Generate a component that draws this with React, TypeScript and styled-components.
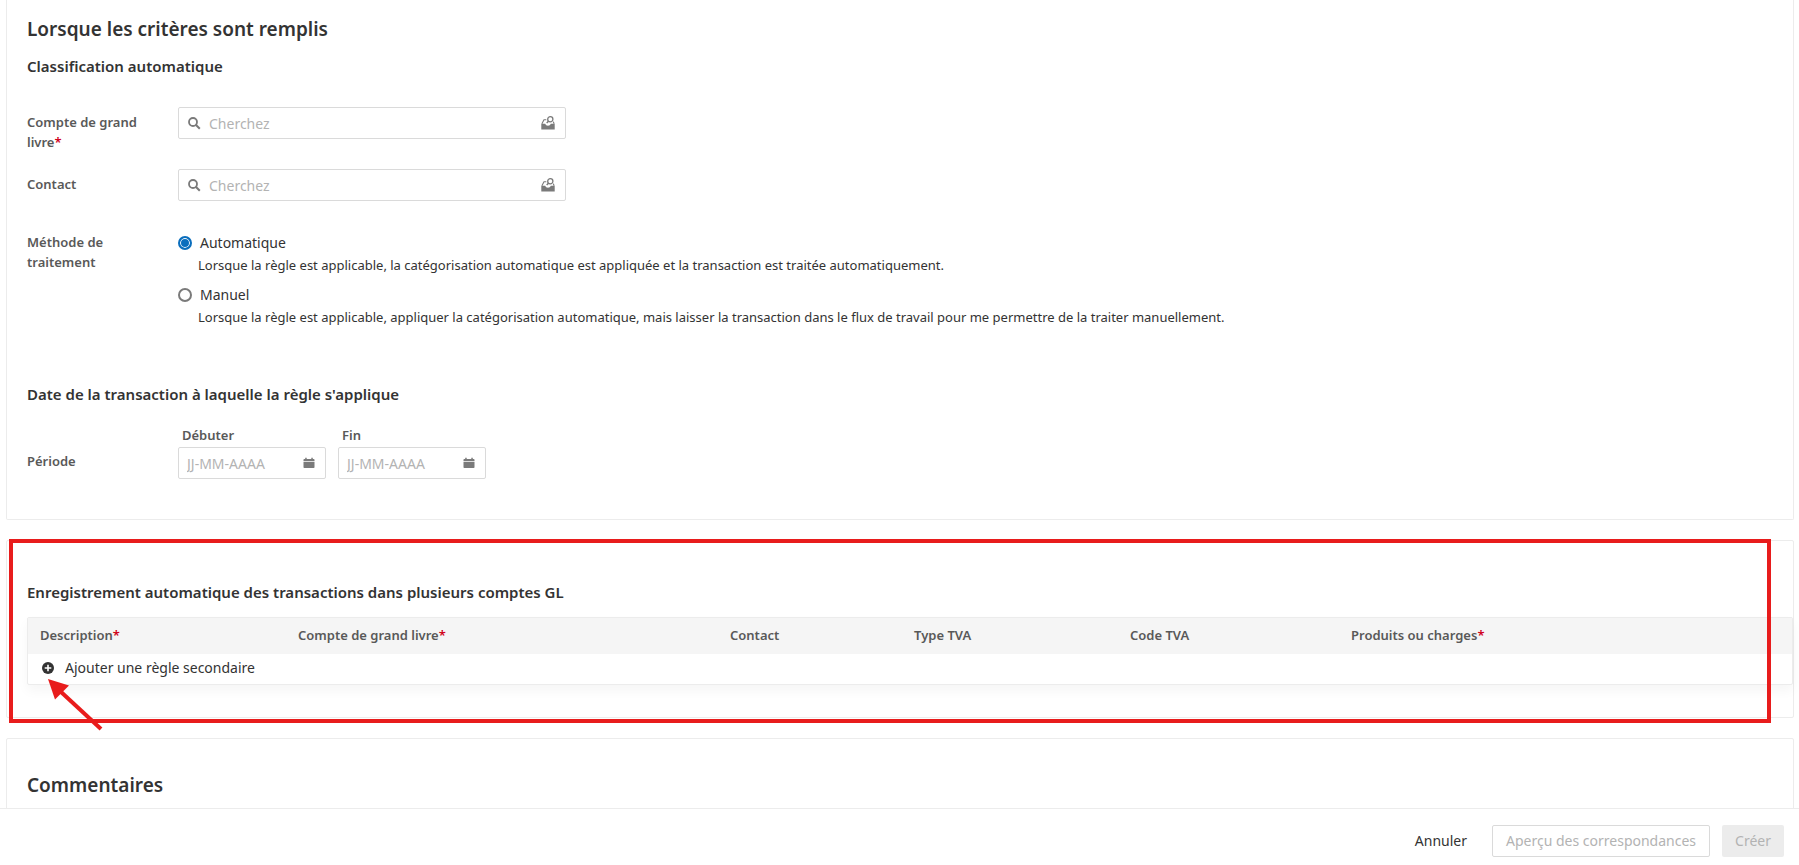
import React, { useId, useState } from 'react';
import styled, { createGlobalStyle, ThemeProvider } from 'styled-components';

const theme = {
  text: '#333333',
  label: '#595959',
  muted: '#b3b3b3',
  icon: '#7a7a7a',
  line: '#ececec',
  fieldLine: '#dadada',
  head: '#f5f5f5',
  accent: '#0a6ebd',
  required: '#d0021b',
  mark: '#e81c1c',
};

const GlobalStyle = createGlobalStyle`
  *, *::before, *::after { box-sizing: border-box; }
  body {
    margin: 0;
    background: #ffffff;
    color: #333333;
    font-family: "Noto Sans", "Open Sans", sans-serif;
    font-size: 13px;
    line-height: 20px;
  }
  button, input { font: inherit; color: inherit; }
`;

const Shell = styled.div`
  display: flex;
  flex-direction: column;
  height: 100vh;
`;

const Content = styled.main`
  flex: 1;
  min-height: 0;
  overflow-y: auto;
  scrollbar-width: none;
  display: flex;
  flex-direction: column;
  gap: 20px;
  padding: 0 5px 0 6px;
`;

const Panel = styled.section<{ $continued?: boolean }>`
  position: relative;
  flex: none;
  border: 1px solid ${({ theme }) => theme.line};
  border-radius: 2px;
  ${({ $continued }) => $continued && 'border-top: 0; border-top-left-radius: 0; border-top-right-radius: 0;'}
`;

const CriteriaPanel = styled(Panel)`
  padding: 15px 20px 40px;
`;

const RulesPanel = styled(Panel)`
  padding: 38px 0 32px 20px;
`;

const CommentsPanel = styled(Panel)`
  padding: 32px 20px 40px;
`;

const Title = styled.h2`
  margin: 0;
  font-size: 19px;
  font-weight: 600;
  line-height: 28px;
`;

const Subtitle = styled.h3`
  margin: 0;
  font-size: 15px;
  font-weight: 600;
  line-height: 26px;
`;

const Classification = styled.div`
  margin-top: 10px;
`;

const Fields = styled.div`
  display: flex;
  flex-direction: column;
  gap: 17px;
  margin-top: 28px;
`;

const FieldRow = styled.div`
  display: grid;
  grid-template-columns: 151px minmax(0, 1fr);
`;

const FieldLabel = styled.label`
  padding: 5px 24px 0 0;
  color: ${({ theme }) => theme.label};
  font-weight: 600;
`;

const Star = styled.span`
  color: ${({ theme }) => theme.required};
`;

const InputBox = styled.div<{ $width: number; $gap: number }>`
  display: flex;
  align-items: center;
  gap: ${({ $gap }) => $gap}px;
  width: 100%;
  max-width: ${({ $width }) => $width}px;
  height: 32px;
  padding: 0 10px 0 ${({ $gap }) => ($gap ? 9 : 8)}px;
  border: 1px solid ${({ theme }) => theme.fieldLine};
  border-radius: 2px;
  background: #ffffff;
  color: ${({ theme }) => theme.icon};
  svg { flex: none; }
`;

const TextInput = styled.input`
  flex: 1;
  min-width: 0;
  height: 30px;
  padding: 0;
  border: 0;
  outline: 0;
  background: none;
  color: ${({ theme }) => theme.text};
  font-size: 14px;
  &::placeholder { color: ${({ theme }) => theme.muted}; opacity: 1; }
`;

const IconButton = styled.button`
  display: flex;
  padding: 0;
  border: 0;
  background: none;
  color: ${({ theme }) => theme.icon};
  cursor: pointer;
`;

const MethodGroup = styled.fieldset`
  display: grid;
  grid-template-columns: 151px minmax(0, 1fr);
  margin: 26px 0 0;
  padding: 0;
  border: 0;
`;

const MethodLabel = styled.span`
  padding: 5px 40px 0 0;
  color: ${({ theme }) => theme.label};
  font-weight: 600;
`;

const Options = styled.div`
  display: flex;
  flex-direction: column;
  gap: 10px;
  padding-top: 6px;
`;

const OptionLabel = styled.label`
  display: flex;
  align-items: center;
  gap: 8px;
  font-size: 14px;
`;

const Radio = styled.input`
  appearance: none;
  width: 14px;
  height: 14px;
  margin: 0;
  border: 2px solid ${({ theme }) => theme.icon};
  border-radius: 50%;
  background: #ffffff;
  &:checked {
    border-color: ${({ theme }) => theme.accent};
    background: ${({ theme }) => theme.accent};
    box-shadow: inset 0 0 0 1px #ffffff;
  }
`;

const OptionHint = styled.p`
  margin: 2px 0 0;
  padding-left: 20px;
`;

const DateSection = styled.div`
  margin-top: 54px;
`;

const DateRow = styled.div`
  display: grid;
  grid-template-columns: 151px minmax(0, 1fr);
  align-items: end;
  margin-top: 18px;
`;

const PeriodLabel = styled.span`
  padding-bottom: 8px;
  color: ${({ theme }) => theme.label};
  font-weight: 600;
`;

const DatePair = styled.div`
  display: flex;
  gap: 12px;
`;

const DateField = styled.div`
  display: flex;
  flex-direction: column;
  gap: 2px;
  width: 148px;
`;

const DateLabel = styled.label`
  padding-left: 4px;
  color: ${({ theme }) => theme.label};
  font-weight: 600;
`;

const TableCard = styled.div`
  margin-top: 12px;
  border: 1px solid ${({ theme }) => theme.line};
  border-radius: 2px;
  background: #ffffff;
  box-shadow: 0 6px 12px rgba(0, 0, 0, 0.04);
`;

const RuleTable = styled.table`
  width: 100%;
  table-layout: fixed;
  border-collapse: collapse;
`;

const Col = styled.col<{ $width?: number }>`
  width: ${({ $width }) => ($width ? `${$width}px` : 'auto')};
`;

const HeadCell = styled.th`
  height: 36px;
  padding: 0 12px 2px;
  background: ${({ theme }) => theme.head};
  color: ${({ theme }) => theme.label};
  font-weight: 600;
  text-align: left;
`;

const AddCell = styled.td`
  height: 30px;
  padding: 0 14px 2px;
`;

const AddButton = styled.button`
  display: flex;
  align-items: center;
  gap: 11px;
  padding: 0;
  border: 0;
  background: none;
  color: ${({ theme }) => theme.text};
  font-size: 14px;
  cursor: pointer;
`;

const HighlightFrame = styled.div`
  position: absolute;
  top: -2px;
  right: 22px;
  bottom: -6px;
  left: 2px;
  z-index: 1;
  border: 4px solid ${({ theme }) => theme.mark};
  pointer-events: none;
`;

const HighlightArrow = styled.svg`
  position: absolute;
  top: 138px;
  left: 40px;
  z-index: 2;
  color: ${({ theme }) => theme.mark};
  pointer-events: none;
`;

const Footer = styled.footer`
  position: relative;
  z-index: 3;
  display: flex;
  flex: none;
  justify-content: flex-end;
  gap: 12px;
  padding: 16px 15px 8px;
  border-top: 1px solid ${({ theme }) => theme.line};
  background: #ffffff;
`;

const Button = styled.button<{ $kind: 'link' | 'outline' | 'solid' }>`
  height: 32px;
  padding: 0 ${({ $kind }) => ($kind === 'outline' ? 13 : 12)}px;
  border: 1px solid ${({ $kind, theme }) => ($kind === 'outline' ? theme.fieldLine : 'transparent')};
  border-radius: 2px;
  background: ${({ $kind }) => ($kind === 'solid' ? '#ececec' : 'none')};
  color: ${({ theme }) => theme.text};
  font-size: 14px;
  cursor: pointer;
  &:disabled { color: ${({ theme }) => theme.muted}; cursor: default; }
`;

const SearchIcon = () => (
  <svg width="13" height="13" viewBox="0 0 13 13" fill="none" stroke="currentColor" aria-hidden="true">
    <circle cx="5" cy="5" r="4" strokeWidth="1.8" />
    <path d="M7.800 7.800l4 4" strokeWidth="2" />
  </svg>
);

const LookupIcon = () => (
  <svg width="14" height="14" viewBox="0 0 14 14" fill="none" stroke="currentColor" aria-hidden="true">
    <path d="M.9 7.800L3 3.700h2.300M12.300 5.600l.8 2.200" strokeWidth="1.100" />
    <path d="M.3 7.800h3.900c.4 1.300 1.400 1.900 2.800 1.900s2.400-.6 2.800-1.900h3.900v5.700H.3z" fill="currentColor" stroke="none" />
    <circle cx="9.300" cy="3.300" r="2.600" fill="#ffffff" strokeWidth="1.300" />
    <path d="M7.400 5.300L5.700 7.100" strokeWidth="1.400" />
  </svg>
);

const CalendarIcon = () => (
  <svg width="12" height="12" viewBox="0 0 12 12" fill="currentColor" aria-hidden="true">
    <path d="M.5 4.200V2.700a.8.8 0 0 1 .8-.8h.9V.800h1.500v1.100h4.600V.800h1.500v1.100h.9a.8.8 0 0 1 .8.8v1.500zM.5 5h11v5.200a.8.8 0 0 1-.8.8H1.300a.8.8 0 0 1-.8-.8z" />
  </svg>
);

const AddIcon = () => (
  <svg width="12" height="12" viewBox="0 0 12 12" aria-hidden="true">
    <circle cx="6" cy="6" r="6" fill="#333333" />
    <path d="M6 2.700v6.600M2.700 6h6.600" stroke="#ffffff" strokeWidth="1.600" />
  </svg>
);

function SearchField({ label, required }: { label: string; required?: boolean }) {
  const id = useId();
  return (
    <FieldRow>
      <FieldLabel htmlFor={id}>
        {label}
        {required && <Star>*</Star>}
      </FieldLabel>
      <InputBox $width={388} $gap={8}>
        <SearchIcon />
        <TextInput id={id} type="text" placeholder="Cherchez" />
        <IconButton type="button" aria-label={`Parcourir : ${label}`}>
          <LookupIcon />
        </IconButton>
      </InputBox>
    </FieldRow>
  );
}

function DateInput({ label }: { label: string }) {
  const id = useId();
  return (
    <DateField>
      <DateLabel htmlFor={id}>{label}</DateLabel>
      <InputBox $width={148} $gap={0}>
        <TextInput id={id} type="text" placeholder="JJ-MM-AAAA" />
        <IconButton type="button" aria-label={`Calendrier : ${label}`}>
          <CalendarIcon />
        </IconButton>
      </InputBox>
    </DateField>
  );
}

const METHODS = [
  {
    value: 'auto',
    label: 'Automatique',
    hint: 'Lorsque la règle est applicable, la catégorisation automatique est appliquée et la transaction est traitée automatiquement.',
  },
  {
    value: 'manual',
    label: 'Manuel',
    hint: 'Lorsque la règle est applicable, appliquer la catégorisation automatique, mais laisser la transaction dans le flux de travail pour me permettre de la traiter manuellement.',
  },
];

const COLUMNS: { label: string; width?: number; required?: boolean }[] = [
  { label: 'Description', width: 258, required: true },
  { label: 'Compte de grand livre', width: 432, required: true },
  { label: 'Contact', width: 184 },
  { label: 'Type TVA', width: 216 },
  { label: 'Code TVA', width: 221 },
  { label: 'Produits ou charges', required: true },
];

export default function App() {
  const [method, setMethod] = useState('auto');

  return (
    <ThemeProvider theme={theme}>
      <GlobalStyle />
      <Shell>
        <Content>
          <CriteriaPanel $continued>
            <Title>Lorsque les critères sont remplis</Title>
            <Classification>
              <Subtitle>Classification automatique</Subtitle>
              <Fields>
                <SearchField label="Compte de grand livre" required />
                <SearchField label="Contact" />
              </Fields>
              <MethodGroup aria-labelledby="method-label">
                <MethodLabel id="method-label">Méthode de traitement</MethodLabel>
                <Options>
                  {METHODS.map(({ value, label, hint }) => (
                    <div key={value}>
                      <OptionLabel>
                        <Radio
                          type="radio"
                          name="method"
                          value={value}
                          checked={method === value}
                          onChange={() => setMethod(value)}
                        />
                        {label}
                      </OptionLabel>
                      <OptionHint>{hint}</OptionHint>
                    </div>
                  ))}
                </Options>
              </MethodGroup>
            </Classification>
            <DateSection>
              <Subtitle>Date de la transaction à laquelle la règle s'applique</Subtitle>
              <DateRow>
                <PeriodLabel>Période</PeriodLabel>
                <DatePair>
                  <DateInput label="Débuter" />
                  <DateInput label="Fin" />
                </DatePair>
              </DateRow>
            </DateSection>
          </CriteriaPanel>

          <RulesPanel>
            <Subtitle>Enregistrement automatique des transactions dans plusieurs comptes GL</Subtitle>
            <TableCard>
              <RuleTable>
                <colgroup>
                  {COLUMNS.map(({ label, width }) => (
                    <Col key={label} $width={width} />
                  ))}
                </colgroup>
                <thead>
                  <tr>
                    {COLUMNS.map(({ label, required }) => (
                      <HeadCell key={label} scope="col">
                        {label}
                        {required && <Star>*</Star>}
                      </HeadCell>
                    ))}
                  </tr>
                </thead>
                <tbody>
                  <tr>
                    <AddCell colSpan={COLUMNS.length}>
                      <AddButton type="button">
                        <AddIcon />
                        Ajouter une règle secondaire
                      </AddButton>
                    </AddCell>
                  </tr>
                </tbody>
              </RuleTable>
            </TableCard>
            <HighlightFrame />
            <HighlightArrow width="56" height="54" viewBox="0 0 56 54" aria-hidden="true">
              <path d="M13 12L54 50" stroke="currentColor" strokeWidth="4" />
              <path d="M1 0l21 6.500L8 20.500z" fill="currentColor" />
            </HighlightArrow>
          </RulesPanel>

          <CommentsPanel>
            <Title>Commentaires</Title>
          </CommentsPanel>
        </Content>

        <Footer>
          <Button type="button" $kind="link">Annuler</Button>
          <Button type="button" $kind="outline" disabled>Aperçu des correspondances</Button>
          <Button type="button" $kind="solid" disabled>Créer</Button>
        </Footer>
      </Shell>
    </ThemeProvider>
  );
}
